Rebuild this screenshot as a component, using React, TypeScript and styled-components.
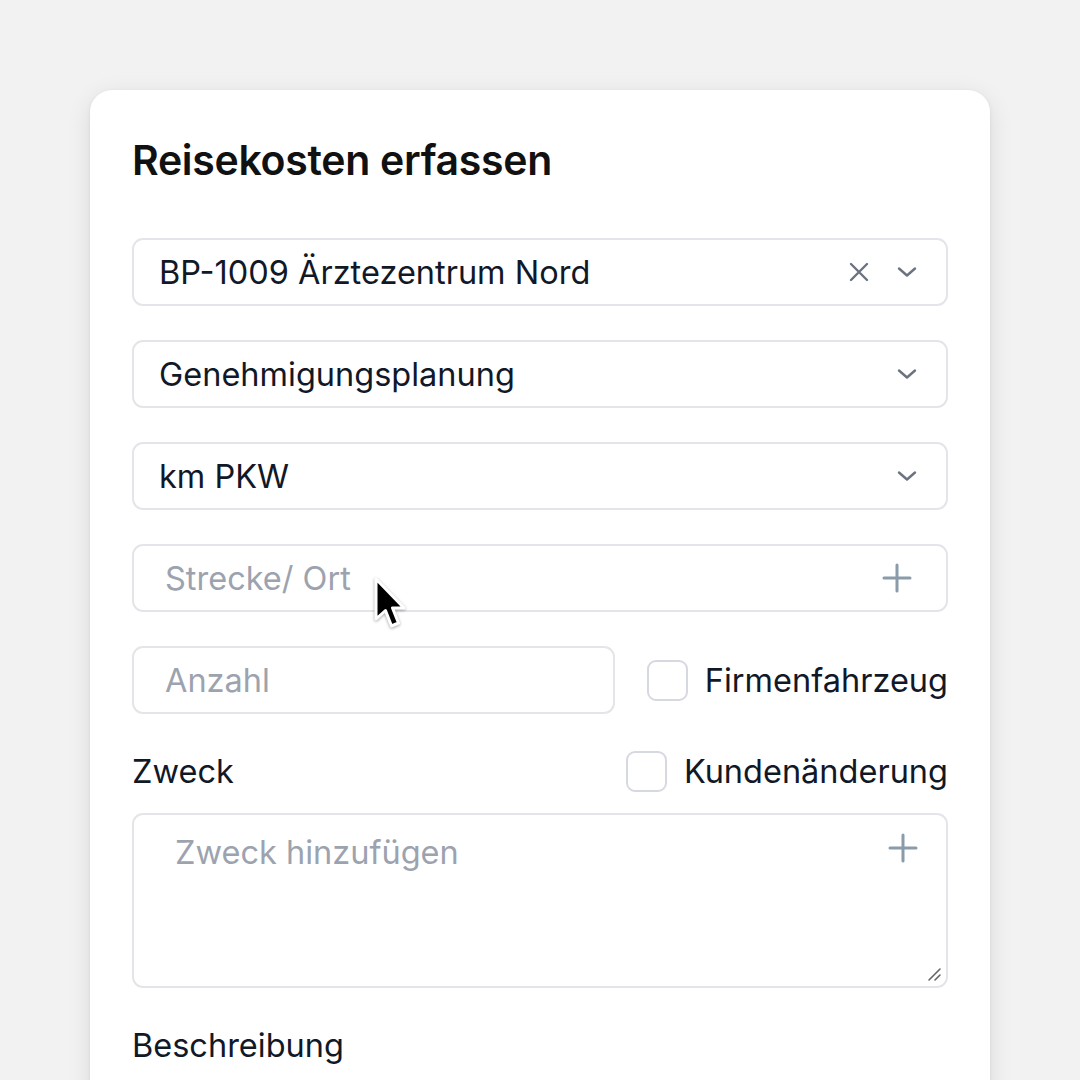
import React from "react";
import styled, { createGlobalStyle } from "styled-components";

const Global = createGlobalStyle`
  html, body { margin: 0; padding: 0; background: #f2f2f2; }
  body { font-family: Inter, "Noto Sans", sans-serif; overflow: hidden; }
  * { box-sizing: border-box; }
`;

const Page = styled.div`
  width: 1080px;
  height: 1080px;
  padding: 90px 90px 0;
  position: relative;
  overflow: hidden;
`;

const Card = styled.div`
  background: #ffffff;
  border-radius: 22px;
  box-shadow: 0 6px 24px rgba(0, 0, 0, 0.1), 0 1px 4px rgba(0, 0, 0, 0.06);
  padding: 46px 42px 60px;
  height: 1100px;
  display: flex;
  flex-direction: column;
`;

const Title = styled.h1`
  margin: 0 0 54px;
  font-size: 41px;
  font-weight: 600;
  color: #111111;
  letter-spacing: -0.3px;
  line-height: 48px;
`;

const Field = styled.div<{ $placeholder?: boolean; $pad?: number; $padRight?: number }>`
  height: 68px;
  border: 2px solid #e3e5ea;
  border-radius: 11px;
  display: flex;
  align-items: center;
  padding: 0 ${(p) => p.$padRight ?? 28}px 0 ${(p) => p.$pad ?? 25}px;
  font-size: 32.5px;
  color: ${(p) => (p.$placeholder ? "#9ca3af" : "#111827")};
  margin-bottom: 34px;
  flex-shrink: 0;
`;

const FieldText = styled.span`
  flex: 1;
  white-space: nowrap;
`;

const Icons = styled.div`
  display: flex;
  align-items: center;
  gap: 26px;
`;

const Row = styled.div`
  display: flex;
  align-items: center;
  justify-content: space-between;
`;

const HalfField = styled(Field)`
  width: 483px;
  margin-bottom: 0;
`;

const CheckLabel = styled.label`
  display: flex;
  align-items: center;
  gap: 17px;
  font-size: 32.5px;
  color: #111827;
`;

const Box = styled.span`
  width: 41px;
  height: 41px;
  border: 2px solid #d6d9df;
  border-radius: 9px;
  background: #fff;
`;

const LabelRow = styled(Row)`
  margin-top: 37px;
  margin-bottom: 21px;
`;

const Label = styled.div`
  font-size: 32.5px;
  color: #111827;
`;

const TextArea = styled.div`
  height: 175px;
  border: 2px solid #e3e5ea;
  border-radius: 11px;
  position: relative;
  padding: 18px 28px 0 41px;
  display: flex;
  align-items: flex-start;
  font-size: 32.5px;
  color: #9ca3af;
`;

const Resize = styled.svg`
  position: absolute;
  right: 4px;
  bottom: 4px;
`;

const SectionLabel = styled(Label)`
  margin-top: 38px;
`;

const Cursor = styled.svg`
  position: absolute;
  left: 373px;
  top: 576px;
  filter: drop-shadow(0 1px 1.5px rgba(0, 0, 0, 0.35));
`;

const Chevron = () => (
  <svg width="22" height="14" viewBox="0 0 22 14">
    <path d="M3 3.5 L11 10.5 L19 3.5" fill="none" stroke="#6b7280" strokeWidth="2.4" strokeLinecap="round" strokeLinejoin="round" />
  </svg>
);

const Cross = () => (
  <svg width="22" height="22" viewBox="0 0 22 22">
    <path d="M3 3 L19 19 M19 3 L3 19" fill="none" stroke="#6b7280" strokeWidth="2.4" strokeLinecap="round" />
  </svg>
);

const Plus = () => (
  <svg width="30" height="30" viewBox="0 0 30 30">
    <path d="M15 2 V28 M2 15 H28" fill="none" stroke="#8a9caa" strokeWidth="3" strokeLinecap="round" />
  </svg>
);

export default function App() {
  return (
    <>
      <Global />
      <Page>
        <Card>
          <Title>Reisekosten erfassen</Title>
          <Field>
            <FieldText>BP-1009 Ärztezentrum Nord</FieldText>
            <Icons>
              <Cross />
              <Chevron />
            </Icons>
          </Field>
          <Field>
            <FieldText>Genehmigungsplanung</FieldText>
            <Chevron />
          </Field>
          <Field>
            <FieldText>km PKW</FieldText>
            <Chevron />
          </Field>
          <Field $placeholder $pad={31} $padRight={34}>
            <FieldText>Strecke/ Ort</FieldText>
            <Plus />
          </Field>
          <Row>
            <HalfField $placeholder $pad={31}>
              <FieldText>Anzahl</FieldText>
            </HalfField>
            <CheckLabel>
              <Box />
              Firmenfahrzeug
            </CheckLabel>
          </Row>
          <LabelRow>
            <Label>Zweck</Label>
            <CheckLabel>
              <Box />
              Kundenänderung
            </CheckLabel>
          </LabelRow>
          <TextArea>
            <FieldText>Zweck hinzufügen</FieldText>
            <Plus />
            <Resize width="16" height="16" viewBox="0 0 16 16">
              <path d="M14 3 L3 14 M14 9 L9 14" stroke="#666" strokeWidth="1.6" strokeLinecap="round" />
            </Resize>
          </TextArea>
          <SectionLabel>Beschreibung</SectionLabel>
        </Card>
        <Cursor width="38" height="58" viewBox="0 0 38 58">
          <path d="M3 3 L3 43 L12.5 34.5 L18.5 50 L25.5 47 L19.5 32 L31 32 Z" fill="#000" stroke="#fff" strokeWidth="3" strokeLinejoin="round" />
        </Cursor>
      </Page>
    </>
  );
}
